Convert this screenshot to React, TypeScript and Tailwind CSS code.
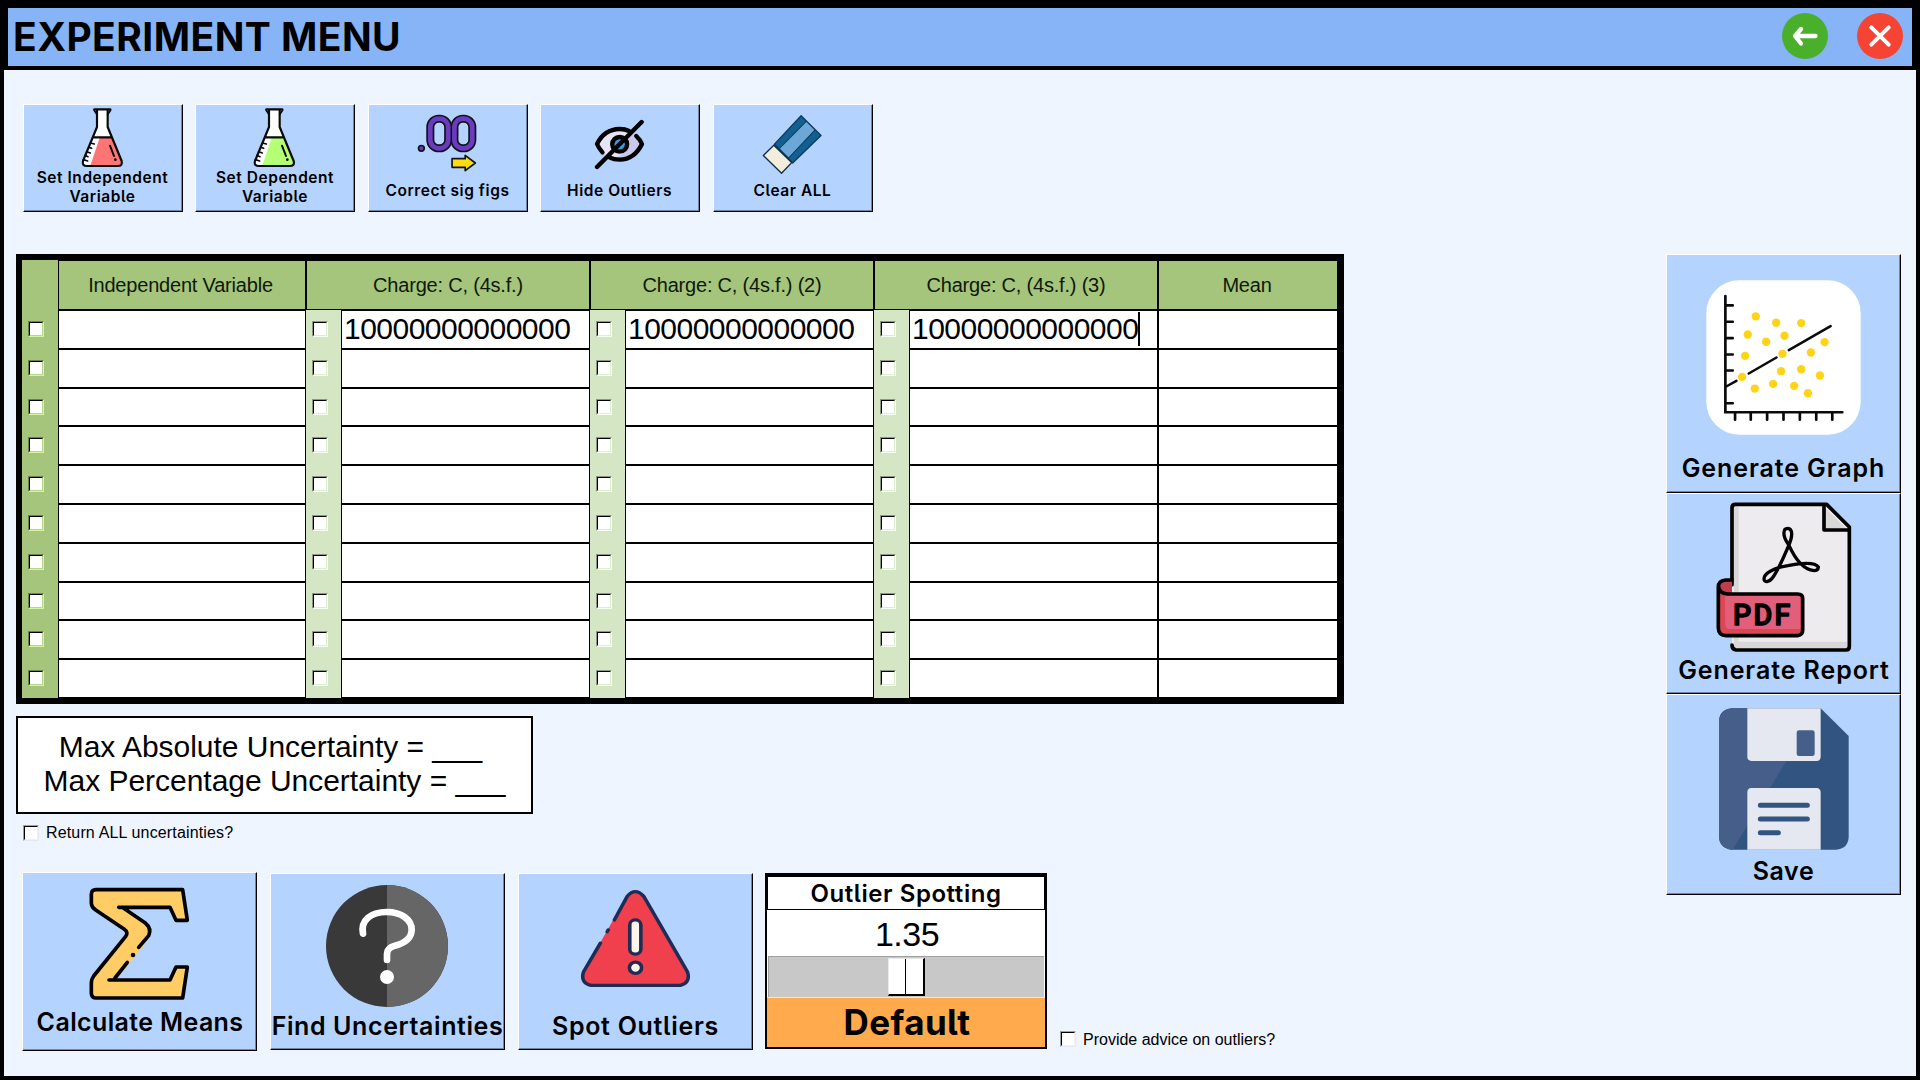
import React from "react";

const ROWS = Array.from({ length: 10 }, (_, i) => i);
const BEVEL =
  "flex flex-col items-center border-t border-l border-t-white border-l-white border-r border-b border-r-black border-b-black bg-[#b4d3ff] shadow-[inset_-1px_-1px_0_#6f86a8] text-black";
const BIG = "text-[25px] leading-[30px] font-semibold whitespace-nowrap";

function Check({ tone = "page" }: { tone?: "dark" | "light" | "page" }) {
  const edge =
    tone === "dark"
      ? "border-t-[#6c8348] border-l-[#6c8348] border-r-[#d5f79c] border-b-[#d5f79c]"
      : tone === "light"
        ? "border-t-[#8b9781] border-l-[#8b9781] border-r-[#f6fff0] border-b-[#f6fff0]"
        : "border-t-[#9aa0a8] border-l-[#9aa0a8] border-r-[#e4e8f0] border-b-[#e4e8f0]";
  const inner =
    tone === "dark"
      ? "border-r-[#b4d788] border-b-[#b4d788]"
      : tone === "light"
        ? "border-r-[#deeed0] border-b-[#deeed0]"
        : "border-r-[#f0f2f8] border-b-[#f0f2f8]";
  return (
    <span className={`block size-4 shrink-0 border ${edge}`}>
      <span className={`block size-full border border-t-black border-l-black bg-white ${inner}`} />
    </span>
  );
}

function Flask({ liquid }: { liquid: string }) {
  return (
    <svg className="mt-[2px] h-[61px] w-[43px] shrink-0" viewBox="242 322 129 183" fill="none" strokeLinecap="round" strokeLinejoin="round">
      <path d="M290 330V382L248 484Q244 499 260 499H352Q368 499 364 484L322 382V330Z" fill="#fff" />
      <path d="M298 414H334L363 484Q367 498 352 498H270Z" fill={liquid} />
      <path d="M282 329H330M290 332V382L248 484Q244 499 260 499H352Q368 499 364 484L322 382V332M280 413H334" stroke="#0a0a0a" strokeWidth="6.5" />
      <path d="M281 331L290 345M331 331L322 345" stroke="#0a0a0a" strokeWidth="5" />
      <path d="M270 430L282 433M265 443L274 446M259 456L270 460M254 467L263 471M249 480L262 484" stroke="#0a0a0a" strokeWidth="5" />
      <path d="M329 438L341 469" stroke="#0a0a0a" strokeWidth="6" />
      <circle cx="345" cy="480" r="4" fill="#0a0a0a" />
    </svg>
  );
}

function SigFigs() {
  const arrow = "M272 206H311V196L341 219L311 242V232H272Z";
  return (
    <svg className="mt-[9px] h-[59px] w-[60px] shrink-0" viewBox="168 72 178 177" preserveAspectRatio="none" fill="none">
      {["#12121c", "#6a3bbf"].map((c, i) => (
        <g key={c} stroke={c} strokeWidth={i ? 14 : 24}>
          <rect x="207.500" y="86" width="53" height="89" rx="25" />
          <rect x="279" y="86" width="53" height="89" rx="25" />
        </g>
      ))}
      <circle cx="181" cy="175" r="8.500" fill="#6a3bbf" stroke="#12121c" strokeWidth="5" />
      <path d={arrow} fill="#ffdd0d" stroke="#12121c" strokeWidth="5" strokeLinejoin="round" />
    </svg>
  );
}

function HiddenEye() {
  return (
    <svg className="mt-[14px] h-[51px] w-[51px] shrink-0" viewBox="692 87 151 153" preserveAspectRatio="none" fill="none" strokeLinecap="round" strokeLinejoin="round">
      <path d="M700 162Q724 118 768 118Q814 118 834 162Q812 207 768 208Q722 206 700 162Z" fill="#e6e4f5" />
      <path d="M790 122Q820 134 834 162Q812 207 768 208L750 206Q800 190 790 122Z" fill="#c9c7ea" />
      <path d="M717 187Q707 176 701 162Q722 118 768 117Q784 117 796 123M817 138Q828 148 834 162Q812 208 768 209Q750 209 738 202" stroke="#000" strokeWidth="13" />
      <circle cx="768" cy="163" r="22" fill="#3b9be0" stroke="#000" strokeWidth="13" />
      <path d="M701 231L833 96" stroke="#000" strokeWidth="13" />
    </svg>
  );
}

function Eraser() {
  return (
    <svg className="mt-[9px] h-[61px] w-[60px] shrink-0" viewBox="1188 72 178 182" preserveAspectRatio="none" strokeLinejoin="round">
      <path d="M1304 77L1363 136L1279 218L1225 162Z" fill="#12608f" />
      <path d="M1319 94L1345 120L1268 202L1240 175Z" fill="#6ba8d8" />
      <path d="M1319 94L1240 175M1345 120L1266 204" stroke="#0f3a5c" strokeWidth="3" />
      <path d="M1304 77L1363 136L1279 218L1225 162Z" fill="none" stroke="#0f3a5c" strokeWidth="4" />
      <path d="M1223 165L1276 217L1246 249L1192 196Z" fill="#f4ecdd" stroke="#0d2d48" strokeWidth="4" />
    </svg>
  );
}

function Tool({ children, label, textClass }: { children: React.ReactNode; label: React.ReactNode; textClass: string }) {
  return (
    <button className={`${BEVEL} h-[108px] w-[160px] shrink-0 pr-px`}>
      {children}
      <span className={`${textClass} text-center text-[15.5px] leading-[18.7px] font-semibold tracking-[0.55px] whitespace-nowrap`}>{label}</span>
    </button>
  );
}

function Header() {
  return (
    <header className="mx-[4px] flex h-[58px] shrink-0 items-center bg-[#86b4f6]">
      <h1 className="ml-[5px] text-[39px] leading-[58px] font-bold tracking-[0.45px]">EXPERIMENT MENU</h1>
      <svg className="mr-[29px] mb-[2px] ml-auto size-[46px]" viewBox="0 0 46 46" fill="none" stroke="#fff" strokeLinecap="round" strokeLinejoin="round">
        <circle cx="23" cy="23" r="23" fill="#4ab02c" stroke="none" />
        <path d="M33.500 23H13M19 16L13 23L19 30.500" strokeWidth="4.300" />
      </svg>
      <svg className="mr-[9px] mb-[2px] size-[46px]" viewBox="0 0 46 46" stroke="#fff" strokeLinecap="round">
        <circle cx="23" cy="23" r="23" fill="#f64434" stroke="none" />
        <path d="M14.300 14.300L31.700 31.700M31.700 14.300L14.300 31.700" strokeWidth="4" />
      </svg>
    </header>
  );
}

function HeadCell({ children, className = "" }: { children: React.ReactNode; className?: string }) {
  return (
    <div className={`flex h-[48px] items-center justify-center bg-[#a4c57b] text-[20px] tracking-[-0.2px] whitespace-nowrap text-[#101808] ${className}`}>{children}</div>
  );
}

function Cells({ first, caret, className }: { first?: string; caret?: boolean; className: string }) {
  return (
    <div className={className}>
      {ROWS.map((r) => (
        <div key={r} className="flex h-[38.8px] items-center border-b-2 border-black bg-white pl-[2px] text-[30px] leading-[36px] tracking-[-0.52px]">
          {r === 0 && first}
          {r === 0 && caret && <span className="h-[34px] w-[2px] bg-black" />}
        </div>
      ))}
    </div>
  );
}

function Checks({ tone, className }: { tone: "dark" | "light"; className: string }) {
  return (
    <div className={className}>
      {ROWS.map((r) => (
        <div key={r} className="h-[38.8px] pt-[10px] pl-[6px]">
          <Check tone={tone} />
        </div>
      ))}
    </div>
  );
}

function DataTable() {
  return (
    <section className="ml-[12px] flex h-[450px] w-[1328px] bg-black pl-[6px] font-['Liberation_Sans',Arial,sans-serif]">
      <Checks tone="dark" className="mt-[6px] h-[438px] w-[36px] bg-[#a4c57b] pt-[51px]" />
      <div className="mt-[7px] mr-px ml-px w-[246px]">
        <HeadCell className="pr-[3px]">Independent Variable</HeadCell>
        <Cells className="mt-[2px]" />
      </div>
      {["Charge: C, (4s.f.)", "Charge: C, (4s.f.) (2)", "Charge: C, (4s.f.) (3)"].map((name, i) => (
        <div key={name} className="mt-[7px] w-[284px]">
          <HeadCell className="mx-px">{name}</HeadCell>
          <div className="flex">
            <Checks tone="light" className="mt-px h-[388px] w-[35px] bg-[#d4e6c4] pt-px" />
            <Cells className="mt-[2px] ml-px w-[247px]" first="10000000000000" caret={i === 2} />
          </div>
        </div>
      ))}
      <div className="mt-[7px] ml-px w-[178px]">
        <HeadCell className="pr-[2px]">Mean</HeadCell>
        <Cells className="mt-[2px]" />
      </div>
    </section>
  );
}

function Sigma() {
  return (
    <svg className="mt-[14px] h-[114px] w-[101px] shrink-0" viewBox="269 111 303 342" fill="none" stroke="#000" strokeWidth="11" strokeLinecap="round" strokeLinejoin="round">
      <path d="M550 119H290Q276 119 276 133V160Q277 172 288 179L375 238Q386 247 379 258L283 378Q276 388 276 398V430Q277 444 290 444H550L563 351H530L512 390H350L446 270Q458 240 440 220L372 172H512L530 211H563Z" fill="#ffcc66" stroke="none" />
      <path d="M358 172H512L530 211H564L550 119H290Q276 119 276 133V160Q277 172 288 179L375 238Q388 247 379 259L283 378Q276 388 276 398V430Q277 444 290 444H550L564 351H530L512 390H329M372 174L438 219Q458 236 448 257L418 292M384 337L347 384" />
      <circle cx="401" cy="315" r="7" fill="#000" stroke="none" />
    </svg>
  );
}

function Question() {
  return (
    <svg className="mt-[11px] size-[122px] shrink-0" viewBox="978 105 366 366" fill="none">
      <circle cx="1161" cy="288" r="183" fill="#393939" />
      <path d="M1161 105A183 183 0 0 1 1161 471Z" fill="#666" />
      <path d="M1089 251C1081 210 1113 186 1160 186C1205 186 1236 210 1235 240C1234 270 1208 281 1185 287Q1161 294 1161 312V330" stroke="#fff" strokeWidth="20" strokeLinecap="round" />
      <circle cx="1161" cy="381" r="21" fill="#fff" />
    </svg>
  );
}

function Warning() {
  return (
    <svg className="mt-[15px] h-[99px] w-[111px] shrink-0" viewBox="224 117 310 298" preserveAspectRatio="none" fill="none" stroke="#1e2c56" strokeWidth="10" strokeLinecap="round" strokeLinejoin="round">
      <path d="M356 136Q379 112 402 136L525 368Q532 398 506 407H252Q224 398 233 368Z" fill="#f0404d" stroke="none" />
      <path d="M320 210L356 139Q378 111 402 139L524 366Q534 398 504 407H254Q224 398 234 366L281 280M303 240L300 246" />
      <rect x="363" y="210" width="31" height="103" rx="15" fill="#fff5e8" />
      <circle cx="379" cy="354" r="17" fill="#fff5e8" />
    </svg>
  );
}

function OutlierPanel() {
  return (
    <div className="mt-px ml-[13px] flex h-[176px] w-[282px] flex-col border-x-[2px] border-t-[4px] border-b-[2px] border-black bg-white">
      <div className="h-[33px] border-x border-b border-black text-center text-[24px] leading-[33px] font-semibold tracking-[0.55px] whitespace-nowrap">Outlier Spotting</div>
      <div className="h-[46px] pl-[2px] text-center font-['Liberation_Sans',Arial,sans-serif] text-[34px] leading-[48px] tracking-[-0.5px]">1.35</div>
      <div className="mx-px flex h-[41px] border-t border-l border-t-[#a0a0a0] border-l-[#a0a0a0] bg-[#c8c8c8] pt-px pl-[119px]">
        <div className="flex h-[38px] w-[37px] border-t border-l border-r-2 border-b-2 border-t-[#e8e8e8] border-l-[#e8e8e8] border-r-black border-b-black bg-white">
          <span className="ml-[16px] w-px bg-black" />
        </div>
      </div>
      <div className="h-[50px] border-t border-[#e8e8e8] bg-[#ffaa4c] pl-[2px] text-center text-[35px] leading-[49px] font-bold tracking-[0.4px]">Default</div>
    </div>
  );
}

function ScatterIcon() {
  const dots = [[314, 229], [375, 248], [450, 249], [290, 283], [345, 305], [400, 287], [520, 306], [282, 347], [394, 341], [479, 337], [273, 410], [390, 393], [450, 387], [506, 406], [311, 445], [366, 431], [429, 437], [470, 459]];
  return (
    <svg className="mt-[25px] mr-px size-[155px] shrink-0" viewBox="165 120 464 464" fill="none" stroke="#0a0a0a" strokeLinecap="round">
      <rect x="166" y="121" width="462" height="462" rx="98" fill="#fff" stroke="none" />
      <path d="M223 168V516H573M223 196H245M223 245H245M223 294H245M223 343H245M223 391H245M223 489H245M252 516V538M299 516V538M348 516V538M397 516V538M446 516V538M495 516V538M543 516V538" strokeWidth="8" />
      <path d="M227 438L256 422M293 400L376 352M413 330L538 258" strokeWidth="7.500" />
      {dots.map(([x, y]) => (
        <circle key={`${x}-${y}`} cx={x} cy={y} r="12.500" fill="#ffd416" stroke="none" />
      ))}
    </svg>
  );
}

function PdfIcon() {
  return (
    <svg className="mt-[7px] mb-px h-[152px] w-[138px] shrink-0" viewBox="195 64 414 456" fill="none" stroke="#000" strokeWidth="11" strokeLinecap="round" strokeLinejoin="round">
      <path d="M246 84Q246 74 256 74H524L598 148V500Q598 511 588 511H258Q246 508 246 496Z" fill="#edebed" stroke="none" />
      <path d="M252 80H266V486H592V506H262Q252 506 252 496Z" fill="#dad7d9" stroke="none" />
      <path d="M522 80L592 150H522Z" fill="#dad7d9" stroke="none" />
      <path d="M246 315V84Q246 74 256 74H530L598 142V500Q598 511 588 511H258Q246 509 246 496M522 76V151H598" />
      <path d="M246 302H228Q205 302 205 322V448Q206 468 228 468H445Q458 466 458 453V358Q458 343 445 343H246Z" fill="#dd4653" stroke="none" />
      <path d="M224 343H452V448H236Q226 446 226 432Z" fill="#e15f7a" stroke="none" />
      <path d="M246 302H228Q206 304 208 322Q212 342 240 342H246Z" fill="#c03d50" stroke="none" />
      <path d="M246 301H228Q205 303 205 322V445Q206 468 228 468H443Q458 466 458 452V356Q458 343 443 343H232Q208 341 206 322" />
      <path d="M416 195C396 168 399 146 413 146C428 147 429 168 416 198C403 228 390 260 374 285C360 310 342 310 342 297C342 281 372 264 414 258C450 251 494 246 505 262C506 279 476 276 452 252C436 236 424 213 416 195Z" strokeWidth="10" />
      <text x="249" y="436" fill="#000" stroke="#000" strokeWidth="4" fontSize="86" fontWeight="500" textLength="172" lengthAdjust="spacing" fontFamily="Roboto, sans-serif">PDF</text>
    </svg>
  );
}

function FloppyIcon() {
  return (
    <svg className="mt-[13px] h-[142px] w-[130px] shrink-0" viewBox="207 83 390 426">
      <path d="M245 84H512L596 167V470Q594 506 558 508H245Q209 504 207 470V122Q209 88 245 84Z" fill="#325480" />
      <path d="M245 84H505L248 508H245Q209 504 207 470V122Q209 88 245 84Z" fill="#455f8a" />
      <path d="M292 84H512V230Q511 242 500 242H304Q292 241 292 230Z" fill="#e5e8f0" />
      <rect x="440" y="150" width="54" height="77" rx="7" fill="#455f8a" />
      <path d="M292 508V335Q293 323 304 323H500Q511 324 512 335V508Z" fill="#e5e8f0" />
      <path d="M331 375H472M331 416H472M331 457H385" stroke="#325480" strokeWidth="15" strokeLinecap="round" />
    </svg>
  );
}

export default function App() {
  return (
    <div className="flex h-[1080px] w-[1920px] flex-col overflow-hidden bg-black px-[4px] pt-[8px] pb-[4px] font-[Inter,sans-serif] text-black">
      <Header />
      <main className="mt-[4px] flex flex-1 bg-[#eef5ff]">
        <div className="flex w-[1500px] flex-col">
          <nav className="mt-[34px] ml-[18.5px] flex gap-[12.5px] [font-feature-settings:'cv05']">
            <Tool label={<>Set Independent<br />Variable</>} textClass="mt-px pl-px"><Flask liquid="#ff7575" /></Tool>
            <Tool label={<>Set Dependent<br />Variable</>} textClass="mt-px pl-px"><Flask liquid="#b4ff75" /></Tool>
            <Tool label="Correct sig figs" textClass="mt-[9px] pl-px"><SigFigs /></Tool>
            <Tool label="Hide Outliers" textClass="mt-[12px]"><HiddenEye /></Tool>
            <Tool label="Clear ALL" textClass="mt-[7px] pl-px"><Eraser /></Tool>
          </nav>
          <div className="h-[42px]" />
          <DataTable />
          <div className="mt-[12px] ml-[12px] h-[98px] w-[517px] border-2 border-black bg-white pt-[12px] text-center font-['Liberation_Sans',Arial,sans-serif] text-[30px] leading-[33.7px] tracking-[-0.03px]">
            <p className="pr-[8px]">Max Absolute Uncertainty = ___</p>
            <p>Max Percentage Uncertainty = ___</p>
          </div>
          <label className="mt-[10px] ml-[19px] flex h-[18px] items-center gap-[7px] font-['Liberation_Sans',Arial,sans-serif] text-[16px] tracking-[0.15px]">
            <Check />
            <span>Return ALL uncertainties?</span>
          </label>
          <div className="mt-[30px] ml-[18px] flex">
            <button className={`${BEVEL} h-[179px] w-[235px]`}>
              <Sigma />
              <span className={`${BIG} mt-[6px] pl-px tracking-[0.37px]`}>Calculate Means</span>
            </button>
            <button className={`${BEVEL} mt-px ml-[13px] h-[177px] w-[235px] pr-px`}>
              <Question />
              <span className={`${BIG} mt-[4px] pl-px tracking-[0.6px]`}>Find Uncertainties</span>
            </button>
            <button className={`${BEVEL} mt-px ml-[13px] h-[177px] w-[235px]`}>
              <Warning />
              <span className={`${BIG} mt-[23px] tracking-[0.7px] [font-feature-settings:'cv05']`}>Spot Outliers</span>
            </button>
            <div className="-ml-px [font-feature-settings:'cv05']">
              <OutlierPanel />
            </div>
            <label className="mt-[158px] ml-[13px] flex h-[18px] items-center gap-[7px] font-['Liberation_Sans',Arial,sans-serif] text-[16px] whitespace-nowrap">
              <Check />
              <span className="mt-px">Provide advice on outliers?</span>
            </label>
          </div>
        </div>
        <aside className="mt-[184px] ml-[162px] flex w-[235px] flex-col">
          <button className={`${BEVEL} h-[239px]`}>
            <ScatterIcon />
            <span className={`${BIG} mt-[18px] tracking-[0.9px]`}>Generate Graph</span>
          </button>
          <button className={`${BEVEL} h-[200.5px]`}>
            <PdfIcon />
            <span className={`${BIG} mt-[1px] pl-px tracking-[0.9px]`}>Generate Report</span>
          </button>
          <button className={`${BEVEL} h-[201.5px]`}>
            <FloppyIcon />
            <span className={`${BIG} mt-[6px] tracking-[0.6px]`}>Save</span>
          </button>
        </aside>
      </main>
    </div>
  );
}
